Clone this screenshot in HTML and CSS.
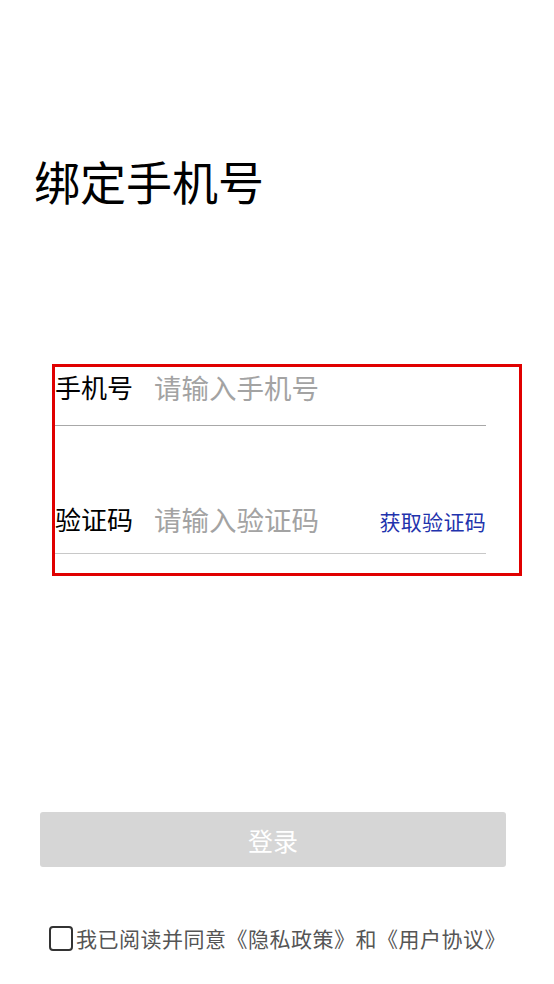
FILE: index.html
```html
<!DOCTYPE html>
<html lang="zh-CN">
<head>
    <meta charset="UTF-8">
    <meta name="viewport" content="width=device-width, initial-scale=1.0">
    <title>绑定手机号</title>
    <link rel="stylesheet" href="styles.css">
</head>
<body>
    <div class="page">
        <h1 class="title">绑定手机号</h1>

        <div class="bind-form">
            <div class="field field-phone">
                <label class="field-label" for="phone">手机号</label>
                <input class="field-input" id="phone" type="tel" placeholder="请输入手机号">
            </div>
            <div class="field field-code">
                <label class="field-label" for="code">验证码</label>
                <input class="field-input" id="code" type="text" placeholder="请输入验证码">
                <a class="get-code" href="#">获取验证码</a>
            </div>
        </div>

        <button class="login-btn" disabled>登录</button>

        <label class="agree">
            <span class="agree-box"></span>
            <span class="agree-text">我已阅读并同意《隐私政策》和《用户协议》</span>
        </label>
    </div>
</body>
</html>
```

FILE: styles.css
```css
body {
    margin: 0;
    background-color: #fff;
    font-family: "Noto Sans CJK SC", "Noto Sans", sans-serif;
    color: #000;
}

.page {
    width: 554px;
    padding-top: 150px;
}

.title {
    margin: 0 0 0 34px;
    font-size: 46px;
    line-height: 60px;
    font-weight: 400;
}

.bind-form {
    margin: 154px 0 0 52px;
    width: 464px;
    border: 3px solid #e00000;
    padding-bottom: 19px;
}

.field {
    display: flex;
    margin-right: 33px;
}

.field-phone {
    height: 58px;
    align-items: flex-start;
    border-bottom: 1px solid #a8a8a8;
}

.field-phone .field-label,
.field-phone .field-input {
    margin-top: 5px;
}

.field-code {
    height: 127px;
    align-items: flex-end;
    border-bottom: 1px solid #c8c8c8;
}

.field-code .field-label,
.field-code .field-input,
.field-code .get-code {
    margin-bottom: 19px;
}

.field-label {
    width: 99px;
    flex-shrink: 0;
    font-size: 26px;
    line-height: 30px;
}

.field-input {
    flex: 1;
    min-width: 0;
    padding: 0;
    border: none;
    outline: none;
    font-family: inherit;
    font-size: 27.5px;
    line-height: 30px;
    height: 30px;
    background: transparent;
}

.field-input::placeholder {
    color: #a3a3a3;
}

.get-code {
    flex-shrink: 0;
    font-size: 21px;
    letter-spacing: 0.3px;
    line-height: 30px;
    color: #1f33ad;
    text-decoration: none;
    position: relative;
    top: 2px;
}

.login-btn {
    display: block;
    margin: 236px 0 0 40px;
    width: 466px;
    height: 55px;
    border: none;
    border-radius: 3px;
    background-color: #d6d6d6;
    color: #fff;
    font-family: inherit;
    font-size: 25px;
}

.agree {
    display: flex;
    align-items: center;
    margin-top: 56px;
    padding-left: 49px;
    height: 30px;
}

.agree-box {
    width: 20px;
    height: 21px;
    border: 2px solid #333;
    border-radius: 4px;
    margin-right: 3px;
}

.agree-text {
    font-size: 21px;
    letter-spacing: 0.5px;
    line-height: 30px;
    color: #555;
}
```
